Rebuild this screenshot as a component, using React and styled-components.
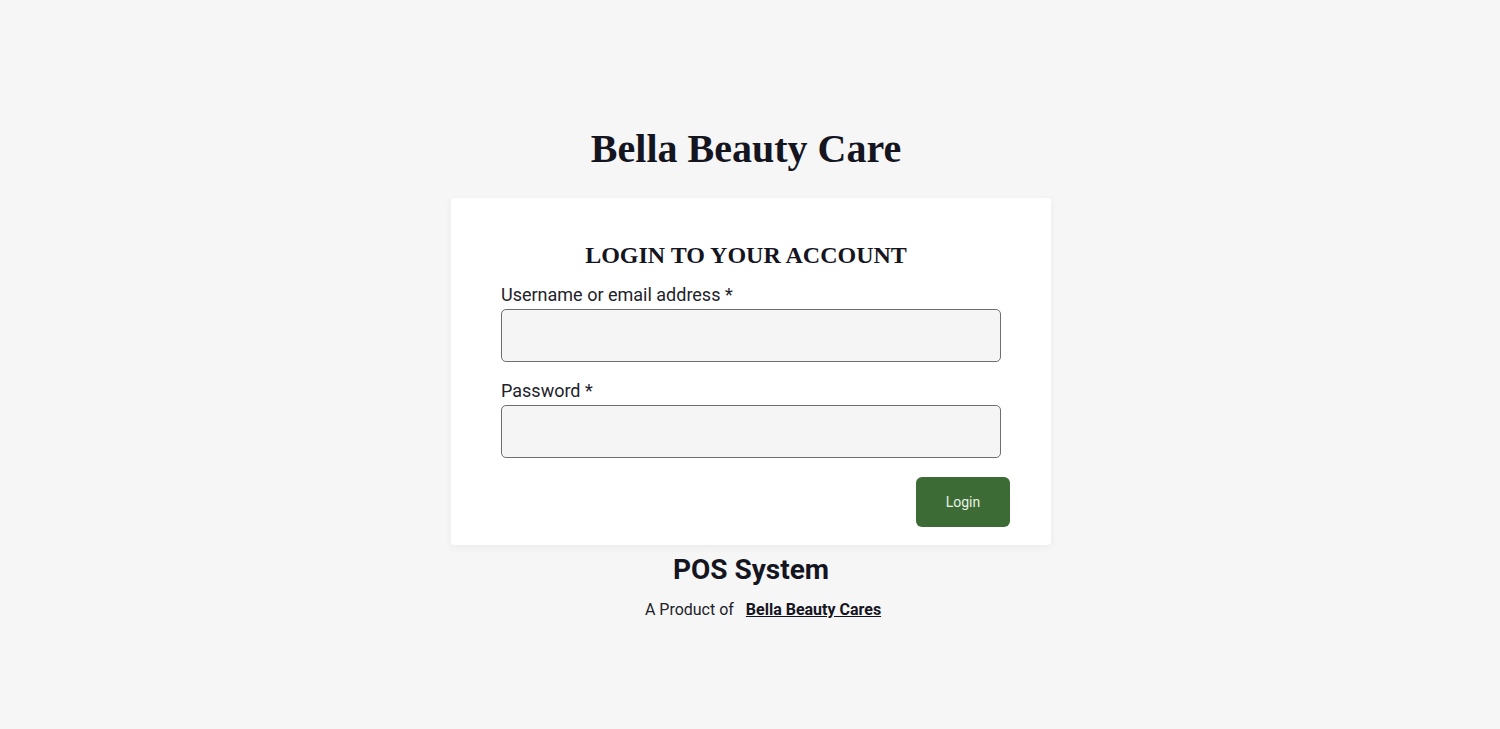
import React from "react";
import styled, { createGlobalStyle } from "styled-components";

const GlobalStyle = createGlobalStyle`
	html, body {
		margin: 0;
		padding: 0;
		background: #f6f6f6;
		font-family: Roboto, "Liberation Sans", sans-serif;
		color: #1a1a22;
	}
	* {
		box-sizing: border-box;
	}
`;

const App = () => {
	return (
		<>
			<GlobalStyle />
			<StyledPage>
				<h1 className="brand">Bella Beauty Care</h1>
				<StyledCard onSubmit={(e) => e.preventDefault()}>
					<h2 className="card-title">LOGIN TO YOUR ACCOUNT</h2>
					<Field>
						<label htmlFor="username">Username or email address *</label>
						<input id="username" type="text" />
					</Field>
					<Field>
						<label htmlFor="password">Password *</label>
						<input id="password" type="password" />
					</Field>
					<div className="actions">
						<LoginButton type="submit">Login</LoginButton>
					</div>
				</StyledCard>
				<StyledFooter>
					<h3>POS System</h3>
					<p>
						A Product of <a href="#">Bella Beauty Cares</a>
					</p>
				</StyledFooter>
			</StyledPage>
		</>
	);
};

const StyledPage = styled.div`
	min-height: 729px;
	display: flex;
	flex-direction: column;
	align-items: center;
	padding-top: 124px;

	.brand {
		margin: 0 8px 0 0;
		font-family: "Liberation Serif", serif;
		font-weight: bold;
		font-size: 40px;
		line-height: 50px;
		color: #15151f;
	}
`;

const StyledCard = styled.form`
	margin: 24px 0 0 2px;
	width: 600px;
	background: #fff;
	border-radius: 4px;
	box-shadow: 0 2px 8px rgba(0, 0, 0, 0.05);
	padding: 40px 41px 18px 50px;
	display: flex;
	flex-direction: column;

	.card-title {
		margin: 0 19px 11px 0;
		text-align: center;
		font-family: "Liberation Serif", serif;
		font-weight: bold;
		font-size: 24px;
		line-height: 34px;
		color: #15151f;
	}

	.actions {
		display: flex;
		justify-content: flex-end;
		margin-top: 2px;
	}
`;

const Field = styled.div`
	display: flex;
	flex-direction: column;
	width: 500px;
	margin-bottom: 17px;

	label {
		font-size: 18px;
		line-height: 24px;
		color: #22222a;
		margin-bottom: 2px;
	}

	input {
		height: 53px;
		border: 1px solid #6e6e6e;
		border-radius: 5px;
		background: #f5f5f5;
		padding: 0 12px;
		font-size: 16px;
		outline: none;
	}
`;

const LoginButton = styled.button`
	width: 94px;
	height: 50px;
	border: none;
	border-radius: 6px;
	background: #3c6b35;
	color: #e9f1e4;
	font-family: Roboto, "Liberation Sans", sans-serif;
	font-size: 14px;
	cursor: pointer;
`;

const StyledFooter = styled.div`
	display: flex;
	flex-direction: column;
	align-items: center;
	margin: 8px 0 0 2px;

	h3 {
		margin: 0;
		font-size: 28px;
		font-weight: bold;
		line-height: 34px;
		color: #15151f;
	}

	p {
		margin: 13px 0 0 24px;
		font-size: 16px;
		line-height: 20px;
		color: #22222a;

		a {
			margin-left: 8px;
			color: #15151f;
			font-weight: bold;
			text-decoration: underline;
		}
	}
`;

export default App;
